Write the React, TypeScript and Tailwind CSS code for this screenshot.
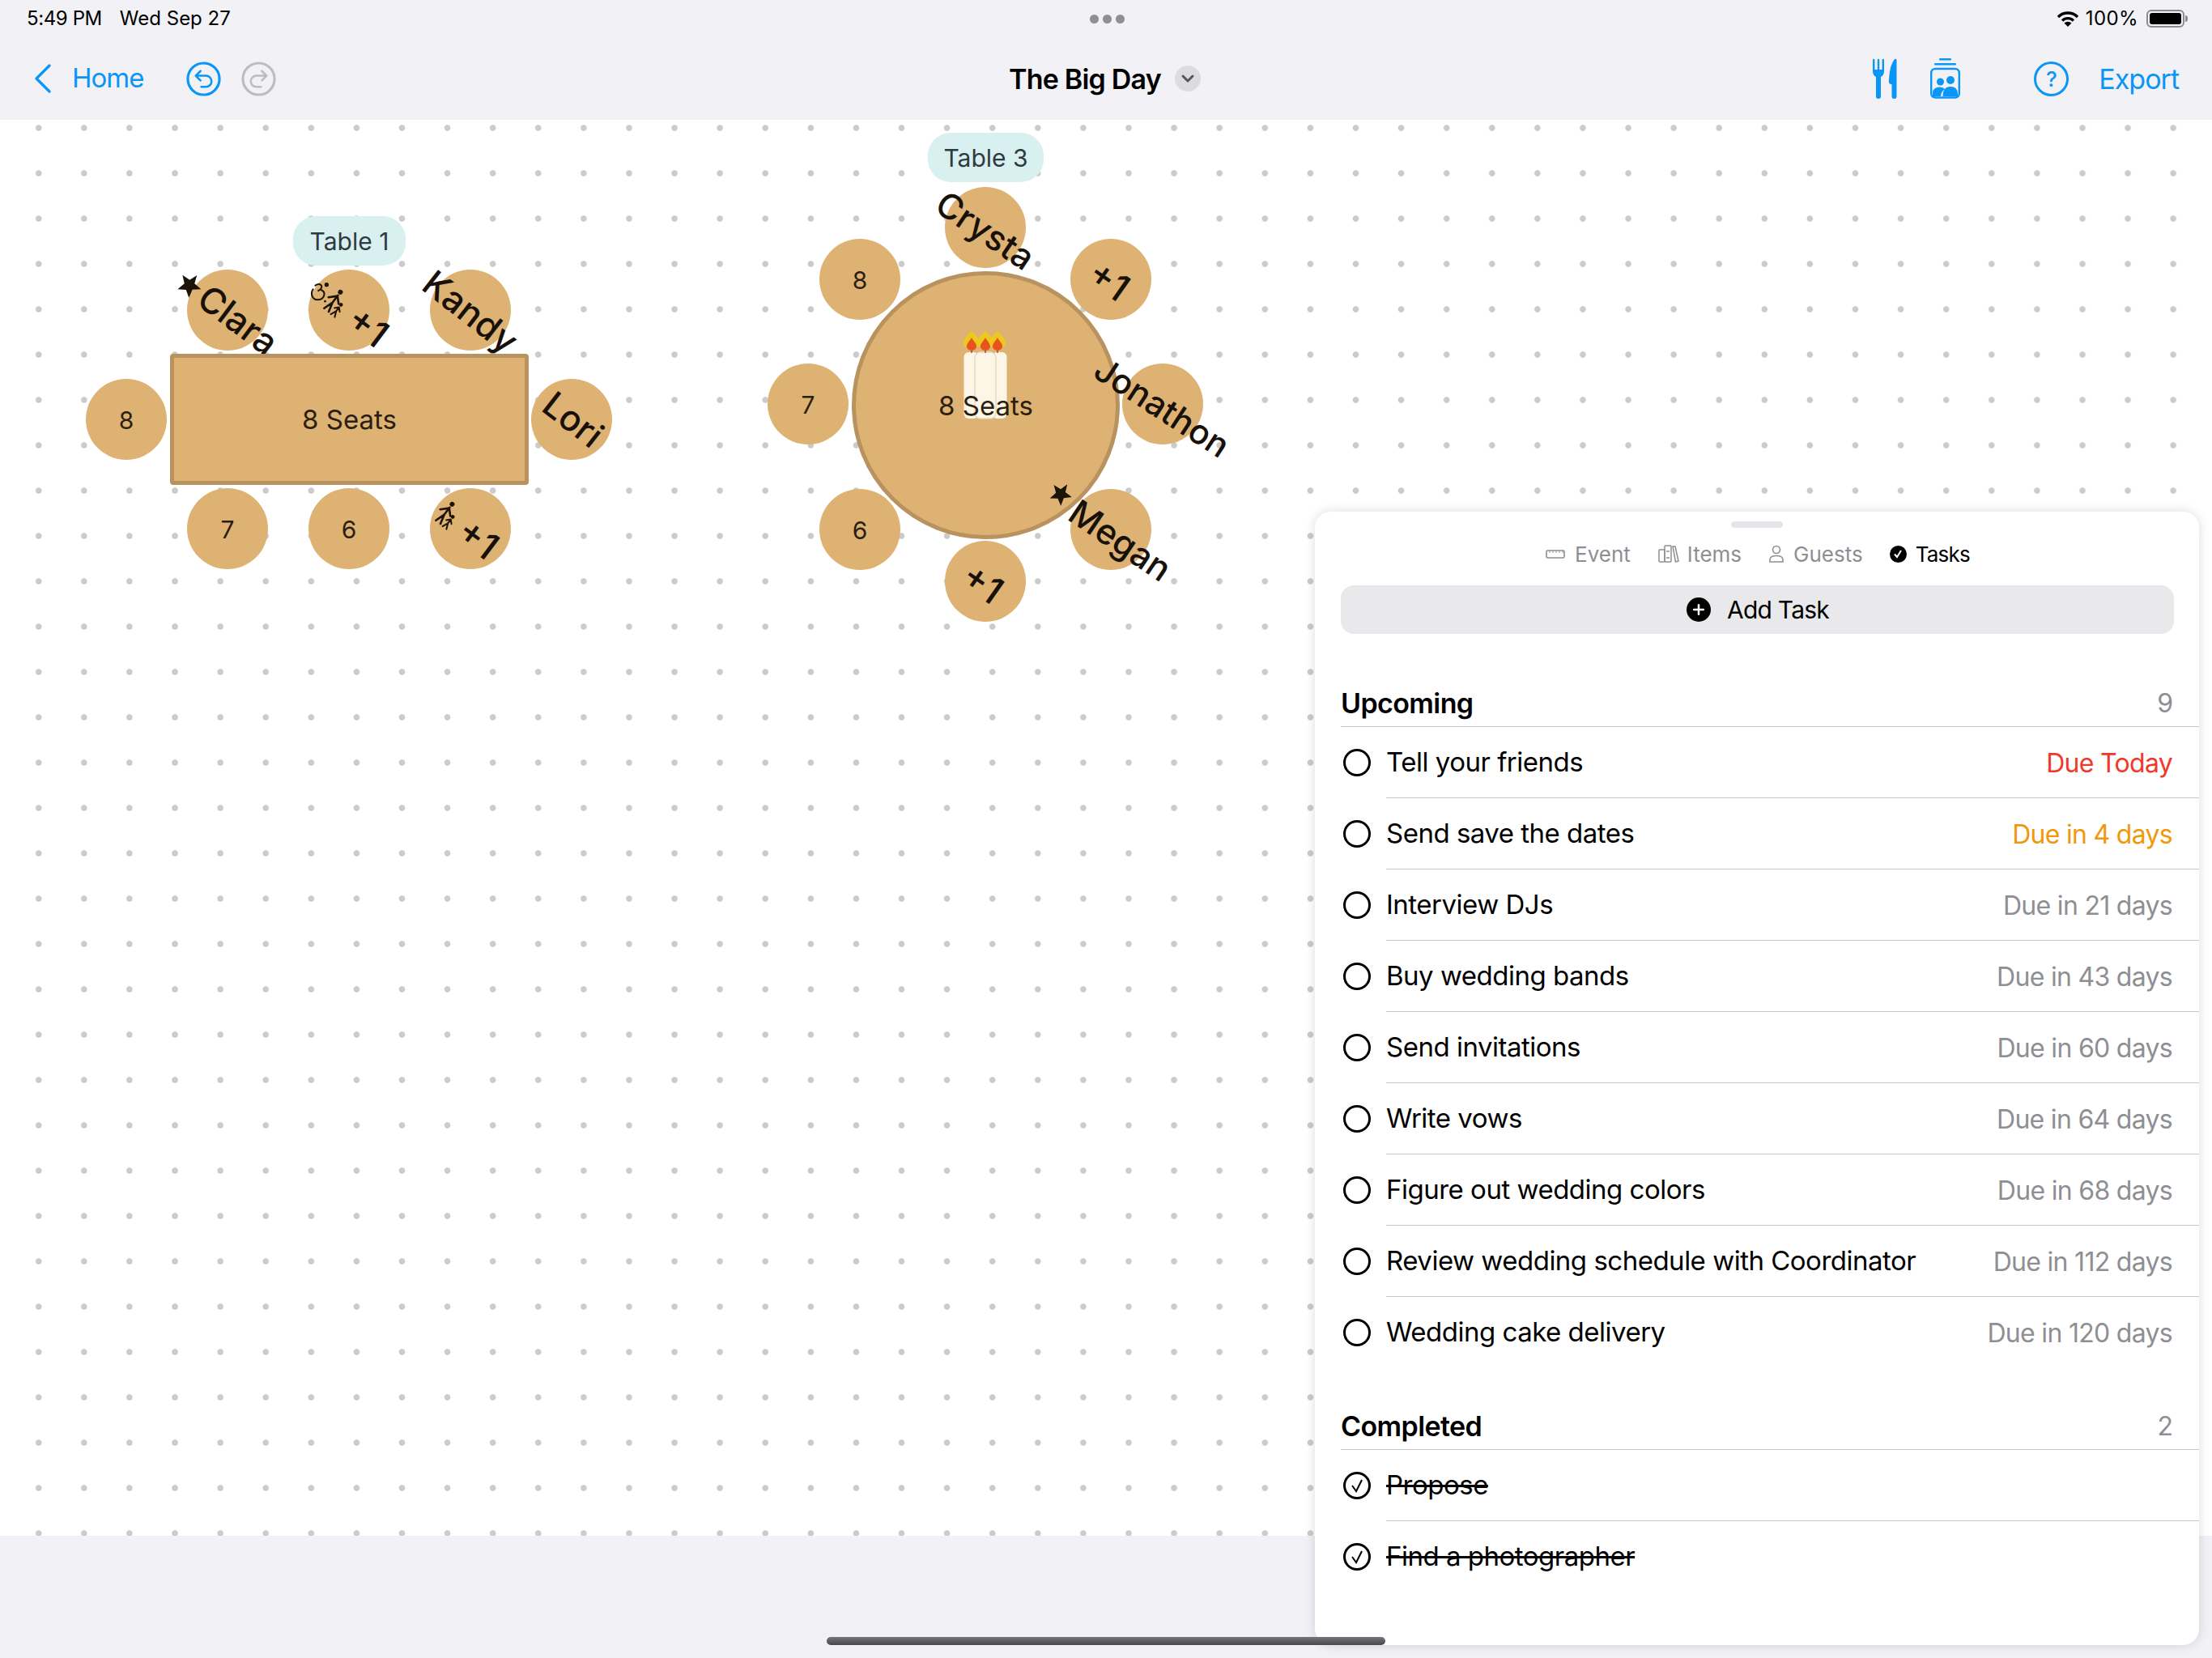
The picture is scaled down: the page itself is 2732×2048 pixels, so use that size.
import { ChevronDown, Plus } from "lucide-react";

const upcoming = [
  { title: "Tell your friends", due: "Due Today", color: "text-[#f0382b]" },
  { title: "Send save the dates", due: "Due in 4 days", color: "text-[#f0980c]" },
  { title: "Interview DJs", due: "Due in 21 days", color: "text-[#8e8e93]" },
  { title: "Buy wedding bands", due: "Due in 43 days", color: "text-[#8e8e93]" },
  { title: "Send invitations", due: "Due in 60 days", color: "text-[#8e8e93]" },
  { title: "Write vows", due: "Due in 64 days", color: "text-[#8e8e93]" },
  { title: "Figure out wedding colors", due: "Due in 68 days", color: "text-[#8e8e93]" },
  { title: "Review wedding schedule with Coordinator", due: "Due in 112 days", color: "text-[#8e8e93]" },
  { title: "Wedding cake delivery", due: "Due in 120 days", color: "text-[#8e8e93]" },
];

const seatBase =
  "absolute flex size-[100px] items-center justify-center rounded-full bg-[#deb273] text-[#2a1f10]";
const seatNumber = "pt-[2px] text-[30px]";

function ArrowCircle({ className }: { className: string }) {
  return (
    <svg viewBox="0 0 44 44" className={className} fill="none" stroke="currentColor" aria-hidden="true">
      <circle cx="22" cy="22" r="20" strokeWidth="3.2" />
      <path d="M18 12 L12 18 L18 24 M12 18 H25 a7 7 0 0 1 7 7 a7 7 0 0 1 -7 7 H19" strokeWidth="2.6" strokeLinecap="round" strokeLinejoin="round" />
    </svg>
  );
}

function StarMark({ className }: { className: string }) {
  return (
    <svg viewBox="0 0 24 24" className={className} fill="#1d1408" aria-hidden="true">
      <path d="M12 1 L15 9 L23.5 9.5 L17 15 L19 23.5 L12 19 L5 23.5 L7 15 L0.5 9.5 L9 9 Z" />
    </svg>
  );
}

function FamilyMark({ className }: { className: string }) {
  return (
    <svg viewBox="0 0 28 34" className={className} fill="none" stroke="#1d1408" strokeWidth="2.6" strokeLinecap="round" aria-hidden="true">
      <circle cx="11" cy="4" r="3" fill="#1d1408" stroke="none" />
      <path d="M11 9 V20 M11 20 L7 32 M11 20 L14 32 M11 10 L3 18 M11 10 L18 17" />
      <circle cx="21" cy="16" r="2.4" fill="#1d1408" stroke="none" />
      <path d="M21 20 V26 M21 26 L18 33 M21 26 L24 33 M21 20 L17 24 M21 20 L25 24" strokeWidth="2" />
    </svg>
  );
}

function WheelchairMark({ className }: { className: string }) {
  return (
    <svg viewBox="0 0 28 28" className={className} fill="none" stroke="#1d1408" strokeWidth="2.2" strokeLinecap="round" aria-hidden="true">
      <circle cx="23" cy="4" r="2.8" fill="#1d1408" stroke="none" />
      <path d="M8 5 C14 1 19 5 15 10 L12 12 M16 11 C23 14 20 24 11 24 C4 24 1 16 5 10" />
      <circle cx="21" cy="26" r="1.4" fill="#1d1408" stroke="none" />
    </svg>
  );
}

function Candles() {
  return (
    <svg viewBox="0 0 54 110" className="absolute left-[133px] top-[68px] h-[110px] w-[54px]" aria-hidden="true">
      <rect x="0.5" y="27" width="18" height="82" rx="6" fill="#fdf6e6" />
      <rect x="35.5" y="27" width="18" height="82" rx="6" fill="#fdf6e6" />
      <rect x="14" y="27" width="26" height="82" rx="7" fill="#fdf6e6" stroke="#e4dcc4" strokeWidth="1.5" />
      {[10, 27, 42].map((x) => (
        <g key={x}>
          <path d={`M${x} 0 C${x + 3} 6 ${x + 12} 10 ${x + 10} 17 Q${x + 8} 22 ${x} 22 Q${x - 8} 22 ${x - 10} 17 C${x - 12} 10 ${x - 3} 6 ${x} 0 Z`} fill="#edc91f" />
          <path d={`M${x} 9 C${x + 2} 13 ${x + 7} 17 ${x + 6} 21 Q${x + 4} 25 ${x} 25 Q${x - 4} 25 ${x - 6} 21 C${x - 7} 17 ${x - 2} 13 ${x} 9 Z`} fill="#e9521a" />
          <path d={`M${x} 25 V28`} stroke="#5a4020" strokeWidth="1.2" />
        </g>
      ))}
    </svg>
  );
}

function NameTag({ name, className }: { name: string; className: string }) {
  return <span className={`whitespace-nowrap font-medium leading-none text-[#17110a] ${className}`}>{name}</span>;
}

function PlusOne({ className }: { className: string }) {
  return <span className={`whitespace-nowrap text-[46px] font-medium leading-none text-[#17110a] ${className}`}>+1</span>;
}

function TaskRow({ title, due, color, last }: { title: string; due: string; color: string; last: boolean }) {
  return (
    <div className="flex h-[88px] items-center pl-[35px]">
      <div className="size-[34px] shrink-0 rounded-full border-[3px] border-black" />
      <div className={`ml-[19px] flex h-full flex-1 items-center justify-between pr-[33px] ${last ? "" : "border-b border-[#c6c6c8]"}`}>
        <span className="text-[33px] tracking-[-0.5px]">{title}</span>
        <span className={`pt-[2px] text-[32px] tracking-[-0.7px] ${color}`}>{due}</span>
      </div>
    </div>
  );
}

function DoneRow({ title, last }: { title: string; last: boolean }) {
  return (
    <div className="flex h-[88px] items-center pl-[35px]">
      <div className="flex size-[34px] shrink-0 items-center justify-center rounded-full border-[3px] border-black">
        <svg viewBox="0 0 16 18" className="h-[18px] w-[16px]" fill="none" stroke="black" strokeWidth="2" aria-hidden="true">
          <path d="M2 9 L7 16 L14 2" />
        </svg>
      </div>
      <div className={`ml-[19px] flex h-full flex-1 items-center ${last ? "" : "border-b border-[#c6c6c8]"}`}>
        <span className="text-[33px] tracking-[-0.5px] line-through">{title}</span>
      </div>
    </div>
  );
}

function SectionHeader({ title, count, className }: { title: string; count: number; className: string }) {
  return (
    <div className={`ml-[32px] flex h-[58px] items-center justify-between border-b border-[#c6c6c8] pr-[32px] ${className}`}>
      <span className="text-[34px] font-semibold tracking-[-0.6px]">{title}</span>
      <span className="text-[32px] text-[#8e8e93]">{count}</span>
    </div>
  );
}

export default function App() {
  return (
    <div className="relative flex h-[2048px] w-[2732px] flex-col overflow-hidden bg-[#f1f1f6] text-black [font-family:Inter,sans-serif]">
      {/* status bar */}
      <div className="grid h-[46px] grid-cols-[1fr_auto_1fr] items-center pl-[33px] pr-[30px] text-[24px]">
        <div className="flex gap-[22px]">
          <span className="tracking-[-0.4px]">5:49 PM</span>
          <span>Wed Sep 27</span>
        </div>
        <div className="flex gap-[5px]">
          <div className="size-[11px] rounded-full bg-[#8e8e93]" />
          <div className="size-[11px] rounded-full bg-[#8e8e93]" />
          <div className="size-[11px] rounded-full bg-[#8e8e93]" />
        </div>
        <div className="flex items-center justify-end">
          <svg viewBox="0 0 28 20" className="h-[20px] w-[28px]" fill="none" stroke="black" strokeWidth="3.4" aria-hidden="true">
            <path d="M2 8 A17 17 0 0 1 26 8" />
            <path d="M7 12.5 A10 10 0 0 1 21 12.5" />
            <path d="M14 20 L9.5 15.5 A6.5 6.5 0 0 1 18.5 15.5 Z" fill="black" stroke="none" />
          </svg>
          <span className="ml-[8px] tracking-[0.4px]">100%</span>
          <div className="ml-[10px] flex h-[22px] w-[47px] items-center rounded-[6px] border-2 border-[#8c8c8c] p-[2px]">
            <div className="h-full w-full rounded-[3px] bg-black" />
          </div>
          <div className="ml-[1px] h-[8px] w-[3px] rounded-r-full bg-[#8c8c8c]" />
        </div>
      </div>

      {/* toolbar */}
      <div className="grid h-[102px] grid-cols-[1fr_auto_1fr] items-center pl-[43px] pr-[41px]">
        <div className="flex items-center text-[#0a96f6]">
          <svg viewBox="0 0 20 36" className="h-[36px] w-[20px]" fill="none" stroke="currentColor" strokeWidth="3.2" strokeLinecap="round" strokeLinejoin="round" aria-hidden="true">
            <path d="M18 2 L2 18 L18 34" />
          </svg>
          <span className="ml-[26px] text-[33px] tracking-[-1px]">Home</span>
          <ArrowCircle className="ml-[53px] size-[43px]" />
          <ArrowCircle className="ml-[25px] size-[43px] -scale-x-100 text-[#bdbdbf]" />
        </div>
        <div className="flex items-center pr-[5px]">
          <span className="text-[34px] font-semibold tracking-[-0.8px]">The Big Day</span>
          <div className="ml-[17px] flex size-[32px] items-center justify-center rounded-full bg-[#dcdce0]">
            <ChevronDown className="size-[24px] text-[#55555a]" strokeWidth={3} aria-hidden="true" />
          </div>
        </div>
        <div className="flex items-center justify-end text-[#0a96f6]">
          <svg viewBox="0 0 30 50" className="h-[50px] w-[30px]" fill="currentColor" aria-hidden="true">
            <path d="M0 2 a1.2 1.2 0 0 1 2.4 0 V14 H5.8 V2 a1.2 1.2 0 0 1 2.4 0 V14 H11.6 V2 a1.2 1.2 0 0 1 2.4 0 V16 Q14 21 10 23 V47 a3 3 0 0 1 -6 0 V23 Q0 21 0 16 Z" />
            <path d="M29.5 2 V47 a3 3 0 0 1 -6 0 V32 H22 Q19 31 20 26 Q21 8 27 1 Q29.5 0 29.5 2 Z" />
          </svg>
          <svg viewBox="0 0 37 50" className="ml-[41px] h-[50px] w-[37px]" fill="currentColor" aria-hidden="true">
            <rect x="11" y="0" width="15" height="2.4" rx="1.2" />
            <rect x="5" y="6" width="27" height="2.4" rx="1.2" />
            <rect x="1.2" y="13" width="34.6" height="35.5" rx="5" fill="none" stroke="currentColor" strokeWidth="2.4" />
            <circle cx="12.5" cy="29" r="4.5" />
            <circle cx="25" cy="27" r="5" />
            <path d="M3 47 V43 Q3 35.5 12 35.5 Q16 35.5 18 38 Q13.5 41 13 47 Z" />
            <path d="M15.5 47 Q15.5 35 25 35 Q34 35 34 44 V47 Z" />
          </svg>
          <div className="ml-[91px] flex size-[43px] items-center justify-center rounded-full border-[3px] border-current text-[26px] font-medium">?</div>
          <span className="ml-[37px] text-[34px] tracking-[-1px]">Export</span>
        </div>
      </div>

      {/* seating canvas */}
      <div className="relative h-[1749px] bg-white bg-[radial-gradient(circle,#cbcbcb_3.4px,transparent_4.2px)] bg-[size:56.1px_56px] bg-[position:19.7px_-18px]">
        {/* table 1 */}
        <div className="absolute left-[362px] top-[119px] flex h-[61px] w-[139px] items-center justify-center rounded-[28px] bg-[#d9f0f1] pt-[2px] text-[30px] text-[#2f3a40]">Table 1</div>
        <div className={`${seatBase} left-[231px] top-[185px]`}>
          <NameTag name="Clara" className="translate-x-[13px] translate-y-[12px] rotate-[37deg] text-[44px]" />
          <StarMark className="absolute left-[-11px] top-[3px] size-[30px] rotate-[37deg]" />
        </div>
        <div className={`${seatBase} left-[381px] top-[185px]`}>
          <PlusOne className="translate-x-[24px] translate-y-[20px] rotate-[37deg]" />
          <WheelchairMark className="absolute left-[1px] top-[15px] size-[26px]" />
          <FamilyMark className="absolute left-[20px] top-[23px] h-[34px] w-[28px] rotate-[37deg]" />
        </div>
        <div className={`${seatBase} left-[531px] top-[185px]`}>
          <NameTag name="Kandy" className="translate-y-[2px] rotate-[38deg] text-[44px]" />
        </div>
        <div className={`${seatBase} ${seatNumber} left-[106px] top-[320px]`}>8</div>
        <div className={`${seatBase} left-[656px] top-[320px]`}>
          <NameTag name="Lori" className="translate-x-[2px] rotate-[38deg] text-[44px]" />
        </div>
        <div className={`${seatBase} ${seatNumber} left-[231px] top-[455px]`}>7</div>
        <div className={`${seatBase} ${seatNumber} left-[381px] top-[455px]`}>6</div>
        <div className={`${seatBase} left-[531px] top-[455px]`}>
          <PlusOne className="translate-x-[10px] translate-y-[12px] rotate-[37deg]" />
          <FamilyMark className="absolute left-[8px] top-[15px] h-[34px] w-[28px] rotate-[37deg]" />
        </div>
        <div className="absolute left-[210px] top-[289px] flex h-[162px] w-[443px] items-center justify-center rounded-[4px] border-[5px] border-[#b9935f] bg-[#deb273] pt-[2px] text-[33px] text-[#2a1f10]">8 Seats</div>

        {/* table 3 */}
        <div className="absolute left-[1146px] top-[16px] flex h-[61px] w-[143px] items-center justify-center rounded-[28px] bg-[#d9f0f1] pt-[2px] text-[30px] text-[#2f3a40]">Table 3</div>
        <div className={`${seatBase} ${seatNumber} left-[1012px] top-[147px]`}>8</div>
        <div className={`${seatBase} left-[1322px] top-[147px]`}>
          <PlusOne className="-translate-x-[2px] translate-y-[1px] rotate-[35deg]" />
        </div>
        <div className={`${seatBase} ${seatNumber} left-[948px] top-[301px]`}>7</div>
        <div className={`${seatBase} ${seatNumber} left-[1012px] top-[456px]`}>6</div>
        <div className={`${seatBase} left-[1167px] top-[520px]`}>
          <PlusOne className="-translate-x-[3px] translate-y-[2px] rotate-[35deg]" />
        </div>
        <div className={`${seatBase} left-[1167px] top-[83px]`} />
        <div className={`${seatBase} left-[1386px] top-[301px]`} />
        <div className={`${seatBase} left-[1322px] top-[456px]`} />
        <div className="absolute left-[1052px] top-[187px] flex size-[331px] items-center justify-center rounded-full border-[5px] border-[#b9935f] bg-[#deb273] text-[#2a1f10]">
          <Candles />
          <span className="relative pt-[2px] text-[33px]">8 Seats</span>
        </div>
        <div className="absolute left-[1167px] top-[83px] flex size-[100px] items-center justify-center">
          <NameTag name="Crysta" className="translate-y-[3px] rotate-[34deg] text-[43px]" />
        </div>
        <div className="absolute left-[1386px] top-[301px] flex size-[100px] items-center justify-center">
          <NameTag name="Jonathon" className="-translate-x-[1px] translate-y-[4px] rotate-[33deg] text-[42px]" />
        </div>
        <div className="absolute left-[1322px] top-[456px] flex size-[100px] items-center justify-center">
          <NameTag name="Megan" className="translate-x-[12px] translate-y-[13px] rotate-[34deg] text-[43px]" />
          <StarMark className="absolute left-[-25px] top-[-9px] size-[28px] rotate-[34deg]" />
        </div>
      </div>

      {/* tasks sheet */}
      <div className="absolute left-[1624px] top-[632px] h-[1400px] w-[1092px] rounded-[20px] bg-white shadow-[0_0_14px_rgba(0,0,0,0.14)]">
        <div className="mx-auto mt-[12px] h-[8px] w-[64px] rounded-full bg-[#e5e5ea]" />
        <div className="mb-[25px] mt-[18px] flex h-[28px] items-center justify-center pl-[2px] text-[26px] text-[#8e8e93]">
          <svg viewBox="0 0 24 11" className="h-[11px] w-[24px]" fill="none" stroke="currentColor" strokeWidth="1.6" aria-hidden="true">
            <rect x="1" y="1" width="22" height="9" rx="1.5" />
            <path d="M5 1 V4 M9 1 V4 M13 1 V4 M17 1 V4 M21 1 V4" strokeWidth="1" />
          </svg>
          <span className="ml-[12px]">Event</span>
          <svg viewBox="0 0 26 22" className="ml-[34px] h-[22px] w-[26px]" fill="none" stroke="currentColor" strokeWidth="1.5" aria-hidden="true">
            <rect x="1" y="6" width="7" height="15" rx="1" />
            <rect x="8" y="1" width="8" height="20" rx="1" />
            <path d="M18 2 L21 2 L25 20 L21.5 21 Z" />
            <path d="M10 8 H14 M10 16 H14" />
          </svg>
          <span className="ml-[10px]">Items</span>
          <svg viewBox="0 0 18 22" className="ml-[34px] h-[22px] w-[18px]" fill="none" stroke="currentColor" strokeWidth="1.6" aria-hidden="true">
            <circle cx="9" cy="6" r="4.5" />
            <path d="M1 21 V18.5 Q1 13.5 9 13.5 Q17 13.5 17 18.5 V21 Z" />
          </svg>
          <span className="ml-[12px]">Guests</span>
          <div className="ml-[33px] flex size-[21px] items-center justify-center rounded-full bg-black">
            <svg viewBox="0 0 12 12" className="size-[12px]" fill="none" stroke="white" strokeWidth="2" aria-hidden="true">
              <path d="M2 6.5 L5 10 L10 2" />
            </svg>
          </div>
          <span className="ml-[11px] tracking-[-0.8px] text-black">Tasks</span>
        </div>
        <div className="ml-[32px] mr-[31px] flex h-[60px] items-center justify-center rounded-[16px] bg-[#e9e9eb] pl-[1px] text-[30px]">
          <div className="flex size-[30px] items-center justify-center rounded-full bg-black">
            <Plus className="size-[20px] text-white" strokeWidth={3} aria-hidden="true" />
          </div>
          <span className="ml-[20px] tracking-[-0.8px]">Add Task</span>
        </div>

        <SectionHeader title="Upcoming" count={9} className="mt-[57px]" />
        {upcoming.map((task, index) => (
          <TaskRow key={task.title} {...task} last={index === upcoming.length - 1} />
        ))}

        <SectionHeader title="Completed" count={2} className="mt-[43px]" />
        <DoneRow title="Propose" last={false} />
        <DoneRow title="Find a photographer" last />
      </div>

      {/* home indicator */}
      <div className="absolute left-[1021px] top-[2022px] h-[10px] w-[690px] rounded-full bg-gradient-to-b from-[#77777b] to-[#48484c]" />
    </div>
  );
}
